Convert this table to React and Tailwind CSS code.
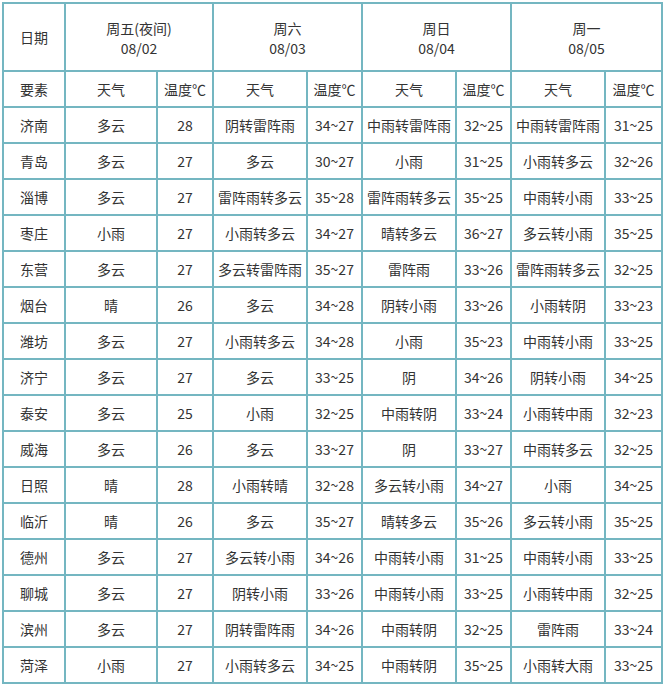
import React from 'react';

const days = [
  { name: '周五(夜间)', date: '08/02' },
  { name: '周六', date: '08/03' },
  { name: '周日', date: '08/04' },
  { name: '周一', date: '08/05' },
];

const rows = [
  ['济南', '多云', '28', '阴转雷阵雨', '34~27', '中雨转雷阵雨', '32~25', '中雨转雷阵雨', '31~25'],
  ['青岛', '多云', '27', '多云', '30~27', '小雨', '31~25', '小雨转多云', '32~26'],
  ['淄博', '多云', '27', '雷阵雨转多云', '35~28', '雷阵雨转多云', '35~25', '中雨转小雨', '33~25'],
  ['枣庄', '小雨', '27', '小雨转多云', '34~27', '晴转多云', '36~27', '多云转小雨', '35~25'],
  ['东营', '多云', '27', '多云转雷阵雨', '35~27', '雷阵雨', '33~26', '雷阵雨转多云', '32~25'],
  ['烟台', '晴', '26', '多云', '34~28', '阴转小雨', '33~26', '小雨转阴', '33~23'],
  ['潍坊', '多云', '27', '小雨转多云', '34~28', '小雨', '35~23', '中雨转小雨', '33~25'],
  ['济宁', '多云', '27', '多云', '33~25', '阴', '34~26', '阴转小雨', '34~25'],
  ['泰安', '多云', '25', '小雨', '32~25', '中雨转阴', '33~24', '小雨转中雨', '32~23'],
  ['威海', '多云', '26', '多云', '33~27', '阴', '33~27', '中雨转多云', '32~25'],
  ['日照', '晴', '28', '小雨转晴', '32~28', '多云转小雨', '34~27', '小雨', '34~25'],
  ['临沂', '晴', '26', '多云', '35~27', '晴转多云', '35~26', '多云转小雨', '35~25'],
  ['德州', '多云', '27', '多云转小雨', '34~26', '中雨转小雨', '31~25', '中雨转小雨', '33~25'],
  ['聊城', '多云', '27', '阴转小雨', '33~26', '中雨转小雨', '33~25', '小雨转中雨', '32~25'],
  ['滨州', '多云', '27', '阴转雷阵雨', '34~26', '中雨转阴', '32~25', '雷阵雨', '33~24'],
  ['菏泽', '小雨', '27', '小雨转多云', '34~25', '中雨转阴', '35~25', '小雨转大雨', '33~25'],
];

const cell = 'bg-white flex items-center justify-center text-center';

const App = () => {
  return (
    <div
      className="bg-white w-[664px] h-[685px] pt-[2px] pl-[2px] text-[14px] text-[#333333]"
      style={{ fontFamily: '"Noto Sans CJK SC", "Noto Sans", sans-serif' }}
    >
      <div className="w-[661px] grid grid-cols-[60px_90px_54px_92px_53px_92px_53px_92px_55px] grid-rows-[66px_repeat(17,34px)] gap-[2px] p-[2px] bg-[#74b6c1]">
        {/* Header: dates */}
        <div className={cell}>日期</div>
        {days.map((d) => (
          <div key={d.date} className={`${cell} col-span-2 flex-col leading-[20px] pt-[2px]`}>
            <span>{d.name}</span>
            <span>{d.date}</span>
          </div>
        ))}

        {/* Header: elements */}
        <div className={cell}>要素</div>
        {days.map((d) => (
          <React.Fragment key={d.date + '-sub'}>
            <div className={cell}>天气</div>
            <div className={cell}>温度℃</div>
          </React.Fragment>
        ))}

        {/* Cities */}
        {rows.map((r) =>
          r.map((v, i) => (
            <div key={r[0] + i} className={`${cell} whitespace-nowrap`}>
              {v}
            </div>
          ))
        )}
      </div>
    </div>
  );
};

export default App;
